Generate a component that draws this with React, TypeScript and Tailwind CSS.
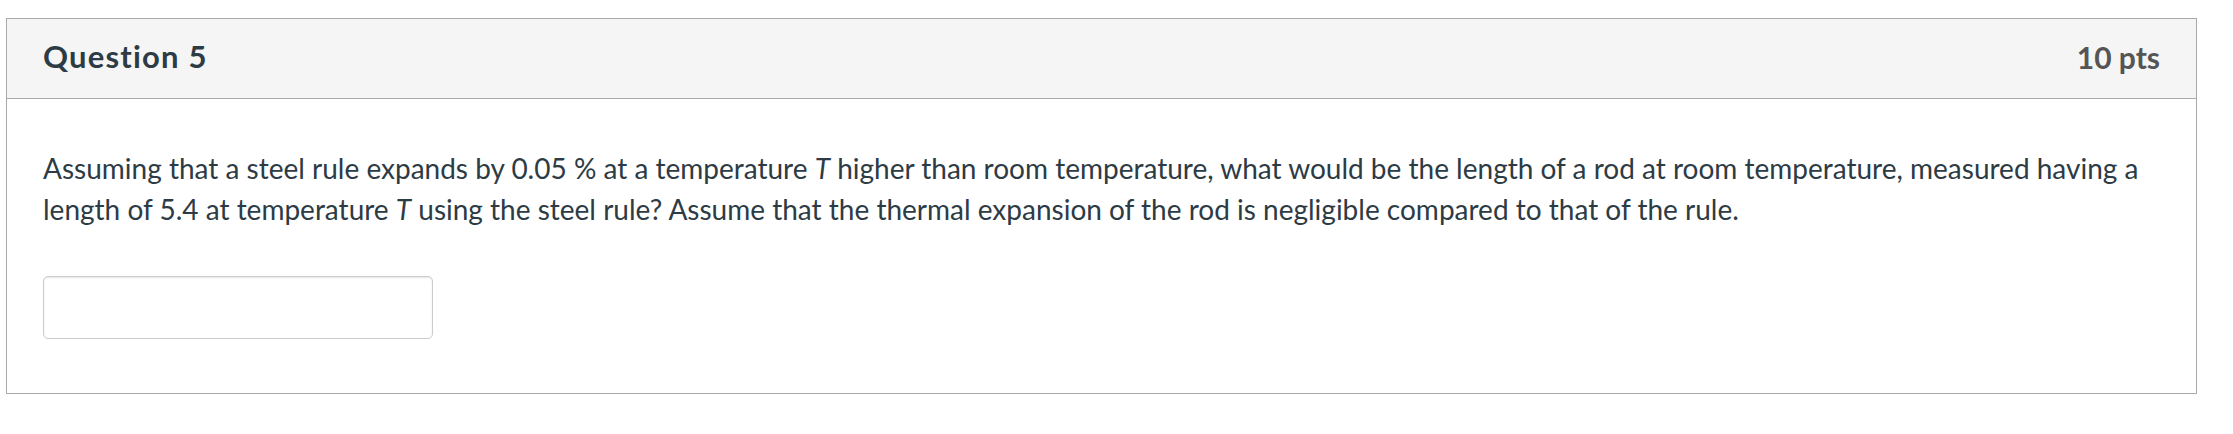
import React from "react";

export default function App() {
  return (
    <div className="w-[2233px] h-[434px] bg-white pt-[18px] pl-[6px]" style={{ fontFamily: "Lato, 'Open Sans', sans-serif" }}>
      <div className="w-[2191px] border border-[#aaaaaa] bg-white">
        <div className="h-[80px] flex items-center justify-between px-[36px] pb-[4px] bg-[#f5f5f5] border-b border-[#aaaaaa]">
          <div className="text-[31px] tracking-[1.2px] font-bold text-[#2d3b45] leading-none">Question 5</div>
          <div className="text-[30px] font-bold text-[#555555] leading-none">10 pts</div>
        </div>
        <div className="px-[36px] pt-[49px] pb-[54px]">
          <p className="text-[28px] leading-[41px] text-[#2d3b45]">
            Assuming that a steel rule expands by 0.05 % at a temperature <i>T</i> higher than room temperature, what would be the length of a rod at room temperature, measured having a length of 5.4 at temperature <i>T</i> using the steel rule? Assume that the thermal expansion of the rod is negligible compared to that of the rule.
          </p>
          <div className="mt-[46px] w-[390px] h-[63px] border border-[#cccccc] rounded-[5px] bg-white shadow-[inset_0_1px_2px_rgba(0,0,0,0.1)]"></div>
        </div>
      </div>
    </div>
  );
}
